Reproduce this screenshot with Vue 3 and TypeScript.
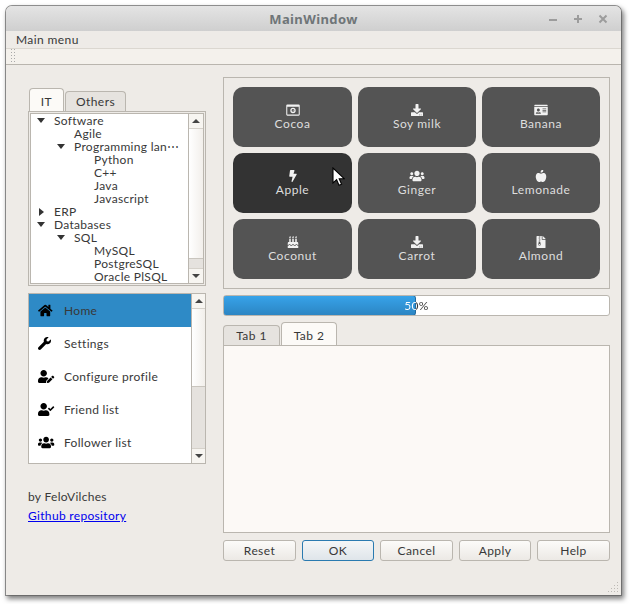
<script setup lang="ts">
interface Tile { label: string; vb: string; d: string }
const dl = 'M216 0h80c13.3 0 24 10.7 24 24v168h87.7c17.8 0 26.7 21.5 14.1 34.1L269.7 378.3c-7.5 7.5-19.8 7.5-27.3 0L90.1 226.1c-12.6-12.6-3.7-34.1 14.1-34.1H192V24c0-13.3 10.7-24 24-24zm296 376v112c0 13.3-10.7 24-24 24H24c-13.3 0-24-10.7-24-24V376c0-13.3 10.7-24 24-24h146.7l49 49c20.1 20.1 52.5 20.1 72.6 0l49-49H488c13.3 0 24 10.7 24 24zm-124 88c0-11-9-20-20-20s-20 9-20 20 9 20 20 20 20-9 20-20zm64 0c0-11-9-20-20-20s-20 9-20 20 9 20 20 20 20-9 20-20z'
const users = 'M96 224c35.3 0 64-28.7 64-64s-28.7-64-64-64-64 28.7-64 64 28.7 64 64 64zm448 0c35.3 0 64-28.7 64-64s-28.7-64-64-64-64 28.7-64 64 28.7 64 64 64zm32 32h-64c-17.6 0-33.5 7.1-45.1 18.6 40.3 22.1 68.9 62 75.1 109.4h66c17.7 0 32-14.3 32-32v-32c0-35.3-28.7-64-64-64zm-256 0c61.9 0 112-50.1 112-112S381.9 32 320 32 208 82.1 208 144s50.1 112 112 112zm76.8 32h-8.3c-20.8 10-43.9 16-68.5 16s-47.6-6-68.5-16h-8.3C179.6 288 128 339.6 128 403.2V432c0 26.5 21.5 48 48 48h288c26.5 0 48-21.5 48-48v-28.8c0-63.6-51.6-115.2-115.2-115.2zm-223.7-13.4C161.5 263.1 145.6 256 128 256H64c-35.3 0-64 28.7-64 64v32c0 17.7 14.3 32 32 32h65.9c6.3-47.4 34.9-87.3 75.2-109.4z'
const tiles: Tile[] = [
  { label: 'Cocoa', vb: '0 0 576 512', d: 'M48 16h480a48 48 0 0 1 48 48v384a48 48 0 0 1-48 48H48a48 48 0 0 1-48-48V64a48 48 0 0 1 48-48zM44 120v332h488V120zM288 160a115 115 0 1 1 0 230a115 115 0 0 1 0-230zM288 215a60 60 0 1 0 0 120a60 60 0 0 0 0-120zM270 300l40-60 14 10-34 60z' },
  { label: 'Soy milk', vb: '0 0 512 512', d: dl },
  { label: 'Banana', vb: '0 0 576 512', d: 'M528 32H48C21.5 32 0 53.5 0 80v16h576V80c0-26.5-21.5-48-48-48zM0 432c0 26.5 21.5 48 48 48h480c26.5 0 48-21.5 48-48V128H0v304zm352-232c0-4.4 3.6-8 8-8h144c4.4 0 8 3.6 8 8v16c0 4.4-3.6 8-8 8H360c-4.4 0-8-3.6-8-8v-16zm0 64c0-4.4 3.6-8 8-8h144c4.4 0 8 3.6 8 8v16c0 4.4-3.6 8-8 8H360c-4.4 0-8-3.6-8-8v-16zm0 64c0-4.4 3.6-8 8-8h144c4.4 0 8 3.6 8 8v16c0 4.4-3.6 8-8 8H360c-4.4 0-8-3.6-8-8v-16zM176 192c35.3 0 64 28.7 64 64s-28.7 64-64 64-64-28.7-64-64 28.7-64 64-64zM67.1 396.2C75.5 370.5 99.6 352 128 352h8.2c12.3 5.1 25.7 8 39.8 8s27.6-2.9 39.8-8h8.2c28.4 0 52.5 18.5 60.9 44.2 3.2 9.9-5.2 19.8-15.6 19.8H82.7c-10.4 0-18.8-10-15.6-19.8z' },
  { label: 'Apple', vb: '0 0 320 512', d: 'M296 160H180.6l42.6-129.8C227.2 15 215.7 0 200 0H56C44 0 33.8 8.9 32.2 20.8l-32 240C-1.7 275.2 9.5 288 24 288h118.7L96.6 482.5c-3.6 15.2 8 29.5 23.3 29.5 8.4 0 16.4-4.4 20.8-12l176-304c9.3-15.9-2.2-36-20.7-36z' },
  { label: 'Ginger', vb: '0 0 640 512', d: users },
  { label: 'Lemonade', vb: '0 0 448 512', d: 'M350.85 129c25.97 4.67 47.27 18.67 63.92 42 14.65 20.67 24.64 46.67 29.96 78 4.67 28.67 4.32 57.33-1 86-7.99 47.33-23.97 87-47.94 119-28.64 38.67-64.59 58-107.87 58-10.66 0-22.3-3.33-34.96-10-8.66-5.33-18.31-8-28.97-8s-20.3 2.67-28.97 8c-12.66 6.67-24.3 10-34.96 10-43.28 0-79.23-19.33-107.87-58-23.97-32-39.95-71.67-47.94-119-5.32-28.67-5.67-57.33-1-86 5.32-31.33 15.31-57.33 29.96-78 16.65-23.33 37.95-37.33 63.92-42 15.98-2.67 37.95-.33 65.92 7 23.97 6.67 44.28 14.67 60.93 24 16.65-9.33 36.96-17.33 60.93-24 27.98-7.33 49.96-9.67 65.94-7zm-54.94-41c-9.32 8.67-21.65 15-36.96 19-10.66 3.33-22.3 5-34.96 5l-14.98-1c-1.33-9.33-1.33-20 0-32 2.67-24 10.32-42.33 22.97-55 9.32-8.67 21.65-15 36.96-19 10.66-3.33 22.3-5 34.96-5l14.98 1 1 15c0 12.67-1.67 24.33-4.99 34.96-3.99 15.32-10.32 27.65-18.98 37.04z' },
  { label: 'Coconut', vb: '0 0 448 512', d: 'M448 384c-28.02 0-31.26-32-74.5-32-43.43 0-46.825 32-74.75 32-27.695 0-31.454-32-74.75-32-42.842 0-47.218 32-74.5 32-28.148 0-31.202-32-74.75-32-43.547 0-46.653 32-74.75 32v-80c0-26.5 21.5-48 48-48h16V112h64v144h64V112h64v144h64V112h64v144h16c26.5 0 48 21.5 48 48v80zm0 128H0v-96c43.356 0 46.767-32 74.75-32 27.951 0 31.253 32 74.75 32 42.843 0 47.217-32 74.5-32 28.148 0 31.201 32 74.75 32 43.357 0 46.767-32 74.75-32 27.488 0 31.252 32 74.5 32v96zM96 96c-17.75 0-32-14.25-32-32 0-31 32-23 32-64 12 0 32 29.5 32 56s-14.25 40-32 40zm128 0c-17.75 0-32-14.25-32-32 0-31 32-23 32-64 12 0 32 29.5 32 56s-14.25 40-32 40zm128 0c-17.75 0-32-14.25-32-32 0-31 32-23 32-64 12 0 32 29.5 32 56s-14.25 40-32 40z' },
  { label: 'Carrot', vb: '0 0 512 512', d: dl },
  { label: 'Almond', vb: '0 0 384 512', d: 'M377 105L279.1 7c-4.5-4.5-10.6-7-17-7H256v128h128v-6.1c0-6.3-2.5-12.4-7-16.9zM128.4 336c-17.9 0-32.4 12.1-32.4 27 0 15 14.6 27 32.5 27s32.4-12.1 32.4-27-14.6-27-32.5-27zM224 136V0h-63.6v32h-32V0H24C10.7 0 0 10.7 0 24v464c0 13.3 10.7 24 24 24h336c13.3 0 24-10.7 24-24V160H248c-13.2 0-24-10.8-24-24zM95.9 32h32v32h-32zm32.3 384c-33.2 0-58-30.4-51.4-62.9L96.4 256v-32h32v-32h-32v-32h32v-32h-32V96h32V64h32v32h-32v32h32v32h-32v32h32v32h-32v32h22.1c5.7 0 10.7 4.1 11.8 9.7l17.3 87.7c6.4 32.4-18.4 62.6-51.4 62.6z' },
]
const tree = [
  { t: 'Software', l: 0, a: 'down' }, { t: 'Agile', l: 1, a: '' },
  { t: 'Programming lan\u22EF', l: 1, a: 'down' }, { t: 'Python', l: 2, a: '' },
  { t: 'C++', l: 2, a: '' }, { t: 'Java', l: 2, a: '' }, { t: 'Javascript', l: 2, a: '' },
  { t: 'ERP', l: 0, a: 'right' }, { t: 'Databases', l: 0, a: 'down' },
  { t: 'SQL', l: 1, a: 'down' }, { t: 'MySQL', l: 2, a: '' },
  { t: 'PostgreSQL', l: 2, a: '' }, { t: 'Oracle PlSQL', l: 2, a: '' },
]
const nav = [
  { t: 'Home', vb: '0 0 576 512', d: 'M280.37 148.26L96 300.11V464a16 16 0 0 0 16 16l112.06-.29a16 16 0 0 0 15.92-16V368a16 16 0 0 1 16-16h64a16 16 0 0 1 16 16v95.64a16 16 0 0 0 16 16.05L464 480a16 16 0 0 0 16-16V300L295.67 148.26a12.19 12.19 0 0 0-15.3 0zM571.6 251.47L488 182.56V44.05a12 12 0 0 0-12-12h-56a12 12 0 0 0-12 12v72.61L318.47 43a48 48 0 0 0-61 0L4.34 251.47a12 12 0 0 0-1.6 16.9l25.5 31A12 12 0 0 0 45.15 301l235.22-193.74a12.19 12.19 0 0 1 15.3 0L530.9 301a12 12 0 0 0 16.9-1.6l25.5-31a12 12 0 0 0-1.7-16.93z' },
  { t: 'Settings', vb: '0 0 512 512', d: 'M507.73 109.1c-2.24-9.03-13.54-12.09-20.12-5.51l-74.36 74.36-67.88-11.31-11.31-67.88 74.36-74.36c6.62-6.62 3.43-17.9-5.66-20.16-47.38-11.74-99.55.91-136.58 37.93-39.64 39.64-50.55 97.1-34.05 147.2L18.74 402.76c-24.99 24.99-24.99 65.51 0 90.5 24.99 24.99 65.51 24.99 90.5 0l213.21-213.21c50.12 16.71 107.47 5.68 147.37-34.22 37.07-37.07 49.7-89.32 37.91-136.73z' },
  { t: 'Configure profile', vb: '0 0 640 512', d: 'M224 256c70.7 0 128-57.3 128-128S294.7 0 224 0 96 57.3 96 128s57.3 128 128 128zm89.6 32h-16.7c-22.2 10.2-46.9 16-72.9 16s-50.6-5.8-72.9-16h-16.7C60.2 288 0 348.2 0 422.4V464c0 26.5 21.5 48 48 48h274.9c-2.4-6.8-3.4-14-2.6-21.3l6.8-60.9 1.2-11.1 7.9-7.9 77.3-77.3c-24.5-27.7-60-45.5-99.9-45.5zm45.3 145.3l-6.8 61c-1.1 10.2 7.5 18.8 17.6 17.6l60.9-6.8 137.9-137.9-71.7-71.7-137.9 137.8zM633 268.9L595.1 231c-9.3-9.3-24.5-9.3-33.8 0l-37.8 37.8-4.1 4.1 71.8 71.7 41.8-41.8c9.3-9.4 9.3-24.5 0-33.9z' },
  { t: 'Friend list', vb: '0 0 640 512', d: 'M224 256c70.7 0 128-57.3 128-128S294.7 0 224 0 96 57.3 96 128s57.3 128 128 128zm89.6 32h-16.7c-22.2 10.2-46.9 16-72.9 16s-50.6-5.8-72.9-16h-16.7C60.2 288 0 348.2 0 422.4V464c0 26.5 21.5 48 48 48h352c26.5 0 48-21.5 48-48v-41.6c0-74.2-60.2-134.4-134.4-134.4zm323-128.4l-27.8-28.1c-4.6-4.7-12.1-4.7-16.8-.1l-104.8 104-45.5-45.8c-4.6-4.7-12.1-4.7-16.8-.1l-28.1 27.9c-4.7 4.6-4.7 12.1-.1 16.8l81.7 82.3c4.6 4.7 12.1 4.7 16.8.1l141.3-140.2c4.6-4.7 4.7-12.2.1-16.8z' },
  { t: 'Follower list', vb: '0 0 640 512', d: users },
]
const actions = [
  { t: 'Reset', w: 73 }, { t: 'OK', w: 72, on: true }, { t: 'Cancel', w: 73 }, { t: 'Apply', w: 72 }, { t: 'Help', w: 73 },
]
const gripDots = [
  [9, 0], [6, 3], [9, 3], [3, 6], [6, 6], [9, 6], [0, 9], [3, 9], [6, 9], [9, 9],
]
</script>

<template>
  <div class="desk">
    <div class="window">
      <header class="titlebar">
        <span class="title">MainWindow</span>
        <div class="controls">
          <svg class="ctl" viewBox="0 0 8 8"><path d="M0 5h8" /></svg>
          <svg class="ctl" viewBox="0 0 8 8"><path d="M0 4h8M4 0v8" /></svg>
          <svg class="ctl" viewBox="0 0 8 8"><path d="M.5 .5l7 7M7.5 .5l-7 7" /></svg>
        </div>
      </header>
      <div class="menubar">Main menu</div>
      <div class="toolbar"><i class="grip"></i></div>
      <main class="central">
        <aside class="left">
          <div class="tabs small">
            <span class="tab on">IT</span><span class="tab">Others</span>
          </div>
          <div class="treebox">
            <div class="tree">
              <div v-for="n in tree" :key="n.t" class="node" :class="'lv' + n.l">
                <i v-if="n.a" class="arrow" :class="n.a"></i>
                <span>{{ n.t }}</span>
              </div>
            </div>
            <div class="sb tsb">
              <div class="sbtn"><i class="up"></i></div>
              <div class="thumb t1"></div>
              <div class="groove"></div>
              <div class="sbtn bot"><i class="dn"></i></div>
            </div>
          </div>
          <div class="navbox">
            <ul class="nav">
              <li v-for="(n, i) in nav" :key="n.t" :class="{ sel: i === 0 }">
                <svg class="navicon" :viewBox="n.vb" preserveAspectRatio="xMinYMid meet"><path :d="n.d" /></svg>
                <span>{{ n.t }}</span>
              </li>
            </ul>
            <div class="sb nsb">
              <div class="sbtn"><i class="up"></i></div>
              <div class="thumb t2"></div>
              <div class="groove"></div>
              <div class="sbtn bot"><i class="dn"></i></div>
            </div>
          </div>
          <p class="by">by FeloVilches</p>
          <a class="link" href="#">Github repository</a>
        </aside>
        <section class="right">
          <div class="frame">
            <button v-for="t in tiles" :key="t.label" class="tile" :class="{ hover: t.label === 'Apple' }">
              <svg class="ticon" :viewBox="t.vb"><path :d="t.d" fill-rule="evenodd" /></svg>
              <span>{{ t.label }}</span>
              <svg v-if="t.label === 'Apple'" class="cursor" viewBox="0 0 13 20">
                <path d="M1 1v15l3.6-3.3 2.4 5.6 2.6-1.1-2.4-5.5h5z" fill="#fff" stroke="#000" stroke-width="1.1" />
              </svg>
            </button>
          </div>
          <div class="progress">
            <div class="fill" :style="{ width: '50%' }"></div>
            <span class="pct">50%</span>
          </div>
          <div class="tabs big">
            <span class="tab">Tab 1</span><span class="tab on">Tab 2</span>
          </div>
          <div class="pane"></div>
          <div class="actions">
            <button v-for="a in actions" :key="a.t" class="act" :class="{ def: a.on }" :style="{ width: a.w + 'px' }">{{ a.t }}</button>
          </div>
        </section>
      </main>
      <svg class="sizegrip" viewBox="0 0 10 10"><rect v-for="(p, i) in gripDots" :key="i" :x="p[0]" :y="p[1]" width="1" height="1" /></svg>
    </div>
  </div>
</template>

<style>
html, body { background: #fff; margin: 0; }
</style>
<style scoped>
* { box-sizing: border-box; }
.desk { width: 631px; height: 604px; padding: 6px 0 0 6px; overflow: hidden; background: #fff; }
.window {
  position: relative;
  width: 615px; height: 589px;
  background: #eeebe7;
  border-radius: 6px 6px 0 0;
  box-shadow: 0 0 0 1px rgba(90,90,90,.65), 2px 3px 5px 1px rgba(0,0,0,.5);
  font: 12px Lato, "Noto Sans", sans-serif;
  color: #383838;
  display: flex; flex-direction: column;
}
.titlebar {
  height: 25px; flex: none; padding-top: 1px;
  background: linear-gradient(#e4e4e4, #cfcfcf);
  border-radius: 6px 6px 0 0;
  display: flex; align-items: center; justify-content: center;
  position: relative;
}
.title { font: bold 13px "Noto Sans", sans-serif; color: #6f7578; letter-spacing: .4px; }
.controls { position: absolute; right: 14px; top: 9px; display: flex; gap: 17px; }
.ctl { width: 8px; height: 8px; fill: none; stroke: #9c9c9c; stroke-width: 2; overflow: visible; }
.menubar { height: 17px; flex: none; padding-left: 10px; line-height: 17px; letter-spacing: .4px; }
.toolbar {
  height: 17px; flex: none; position: relative;
  background: #f4f1ec;
  border-top: 1px solid #dbd7d0; border-bottom: 1px solid #b9b5ae;
}
.grip {
  position: absolute; left: 5px; top: 0; width: 5px; height: 15px;
  background-image: radial-gradient(circle at .5px .5px, #a9a9a9 .5px, transparent .8px);
  background-size: 3px 3px;
}
.central {
  flex: 1; min-height: 0;
  display: grid; grid-template-columns: 178px 387px; column-gap: 17px;
  padding: 12px 0 0 22px;
}
.left { padding-top: 11px; display: flex; flex-direction: column; min-width: 0; }
.right { display: flex; flex-direction: column; min-width: 0; }
.tabs { display: flex; align-items: flex-end; }
.tabs.small { height: 23px; padding-left: 1px; gap: 1px; }
.tabs.big { height: 23px; margin-top: 6px; gap: 1px; }
.tab {
  display: flex; align-items: center; justify-content: center;
  height: 20px;
  background: #e6e3df;
  border: 1px solid #bab6af; border-bottom: none;
  border-radius: 4px 4px 0 0;
  letter-spacing: .45px;
}
.tab.on { height: 23px; background: #fcfaf7; padding-top: 3px; }
.tabs.small .tab { width: 61px; }
.tabs.small .tab.on { width: 35px; }
.tabs.big .tab { width: 57px; }
.tabs.big .tab.on { width: 56px; }
.treebox {
  height: 175px; display: flex;
  border: 1px solid #bab6af; padding: 1px;
  background: #eeebe7; overflow: hidden;
}
.tree {
  flex: 1; min-width: 0; background: #fff;
  border: 1px solid #bab6af; border-right: none; overflow: hidden;
}
.node { height: 13px; line-height: 13px; position: relative; white-space: nowrap; letter-spacing: .3px; }
.lv0 { padding-left: 23px; }
.lv1 { padding-left: 43px; }
.lv2 { padding-left: 63px; }
.arrow { position: absolute; width: 0; height: 0; }
.arrow.down { border: 4.5px solid transparent; border-top: 5px solid #333; border-bottom: none; top: 4px; }
.lv0 .arrow.down { left: 6px; }
.lv1 .arrow.down { left: 26px; }
.arrow.right { border: 4px solid transparent; border-left: 5px solid #333; border-right: none; left: 8px; top: 3px; }
.sb { display: flex; flex-direction: column; background: #fcfaf7; border: 1px solid #bab6af; flex: none; }
.tsb { width: 16px; }
.sbtn { height: 15px; flex: none; display: flex; align-items: center; justify-content: center; background: #f7f5f1; border-bottom: 1px solid #d5d1ca; }
.sbtn.bot { border-bottom: none; border-top: 1px solid #d5d1ca; }
.up { border: 4px solid transparent; border-bottom: 4px solid #444; border-top: none; }
.dn { border: 4px solid transparent; border-top: 4px solid #444; border-bottom: none; }
.thumb { flex: none; background: linear-gradient(90deg, #fff, #f2efeb); border-bottom: 1px solid #c9c5be; }
.t1 { height: 130px; }
.t2 { height: 78px; }
.groove { flex: 1; background: #e5e2de; }
.navbox { margin-top: 7px; height: 171px; display: flex; border: 1px solid #bab6af; background: #fff; }
.nav { flex: 1; margin: 0; padding: 0; list-style: none; min-width: 0; }
.nav li { height: 33px; display: flex; align-items: center; padding-left: 9px; letter-spacing: .32px; }
.nav li.sel { background: #2e8ac6; }
.navicon { width: 17px; height: 13px; margin-right: 9px; fill: #000; flex: none; }
.nsb { width: 14px; border-width: 0 0 0 1px; }
.by { margin: 25px 0 0; line-height: 16px; letter-spacing: .3px; }
.link { margin-top: 3px; line-height: 16px; color: #0000ee; letter-spacing: .32px; }
.frame {
  height: 212px; flex: none;
  border: 1px solid #bab6af;
  padding: 9px;
  display: grid; grid-template-columns: 119px 118px 118px; grid-auto-rows: 60px; gap: 6px;
}
.tile {
  border: none; padding: 0; margin: 0; position: relative;
  background: #545454; color: #dedede; border-radius: 10px;
  display: flex; flex-direction: column; align-items: center; justify-content: center;
  font: 12px/13px Lato, "Noto Sans", sans-serif; letter-spacing: .55px;
}
.tile.hover { background: #333; }
.ticon { height: 12px; width: 18px; fill: #f2f2f2; margin-bottom: 1px; }
.cursor { position: absolute; left: 99px; top: 14px; width: 13px; height: 20px; }
.progress {
  position: relative; height: 21px; margin-top: 6px; flex: none;
  background: #fff; border: 1px solid #bab6af; border-radius: 3px;
  display: flex; align-items: center; justify-content: center; overflow: hidden;
}
.fill { position: absolute; left: -1px; top: -1px; bottom: -1px; background: linear-gradient(#37a3e9, #2c85c3); border: 1px solid #23699c; border-radius: 3px; }
.pct {
  position: relative; letter-spacing: .4px;
  background: linear-gradient(90deg, #fff 48%, #383838 48%);
  -webkit-background-clip: text; background-clip: text; color: transparent;
}
.pane { height: 188px; flex: none; background: #fcf9f6; border: 1px solid #bab6af; }
.actions { display: flex; justify-content: space-between; margin-top: 7px; }
.act {
  height: 21px; padding: 0; border: 1px solid #bab6af; border-radius: 3px;
  background: linear-gradient(#fcfbf9, #ece9e5); color: #383838;
  font: 12px Lato, "Noto Sans", sans-serif; letter-spacing: .4px;
}
.act.def { border-color: #2a7ab0; background: linear-gradient(#f4f6f7, #dfe5ea); }
.sizegrip { position: absolute; right: 3px; bottom: 3px; width: 10px; height: 10px; fill: #bdbab5; }
</style>
